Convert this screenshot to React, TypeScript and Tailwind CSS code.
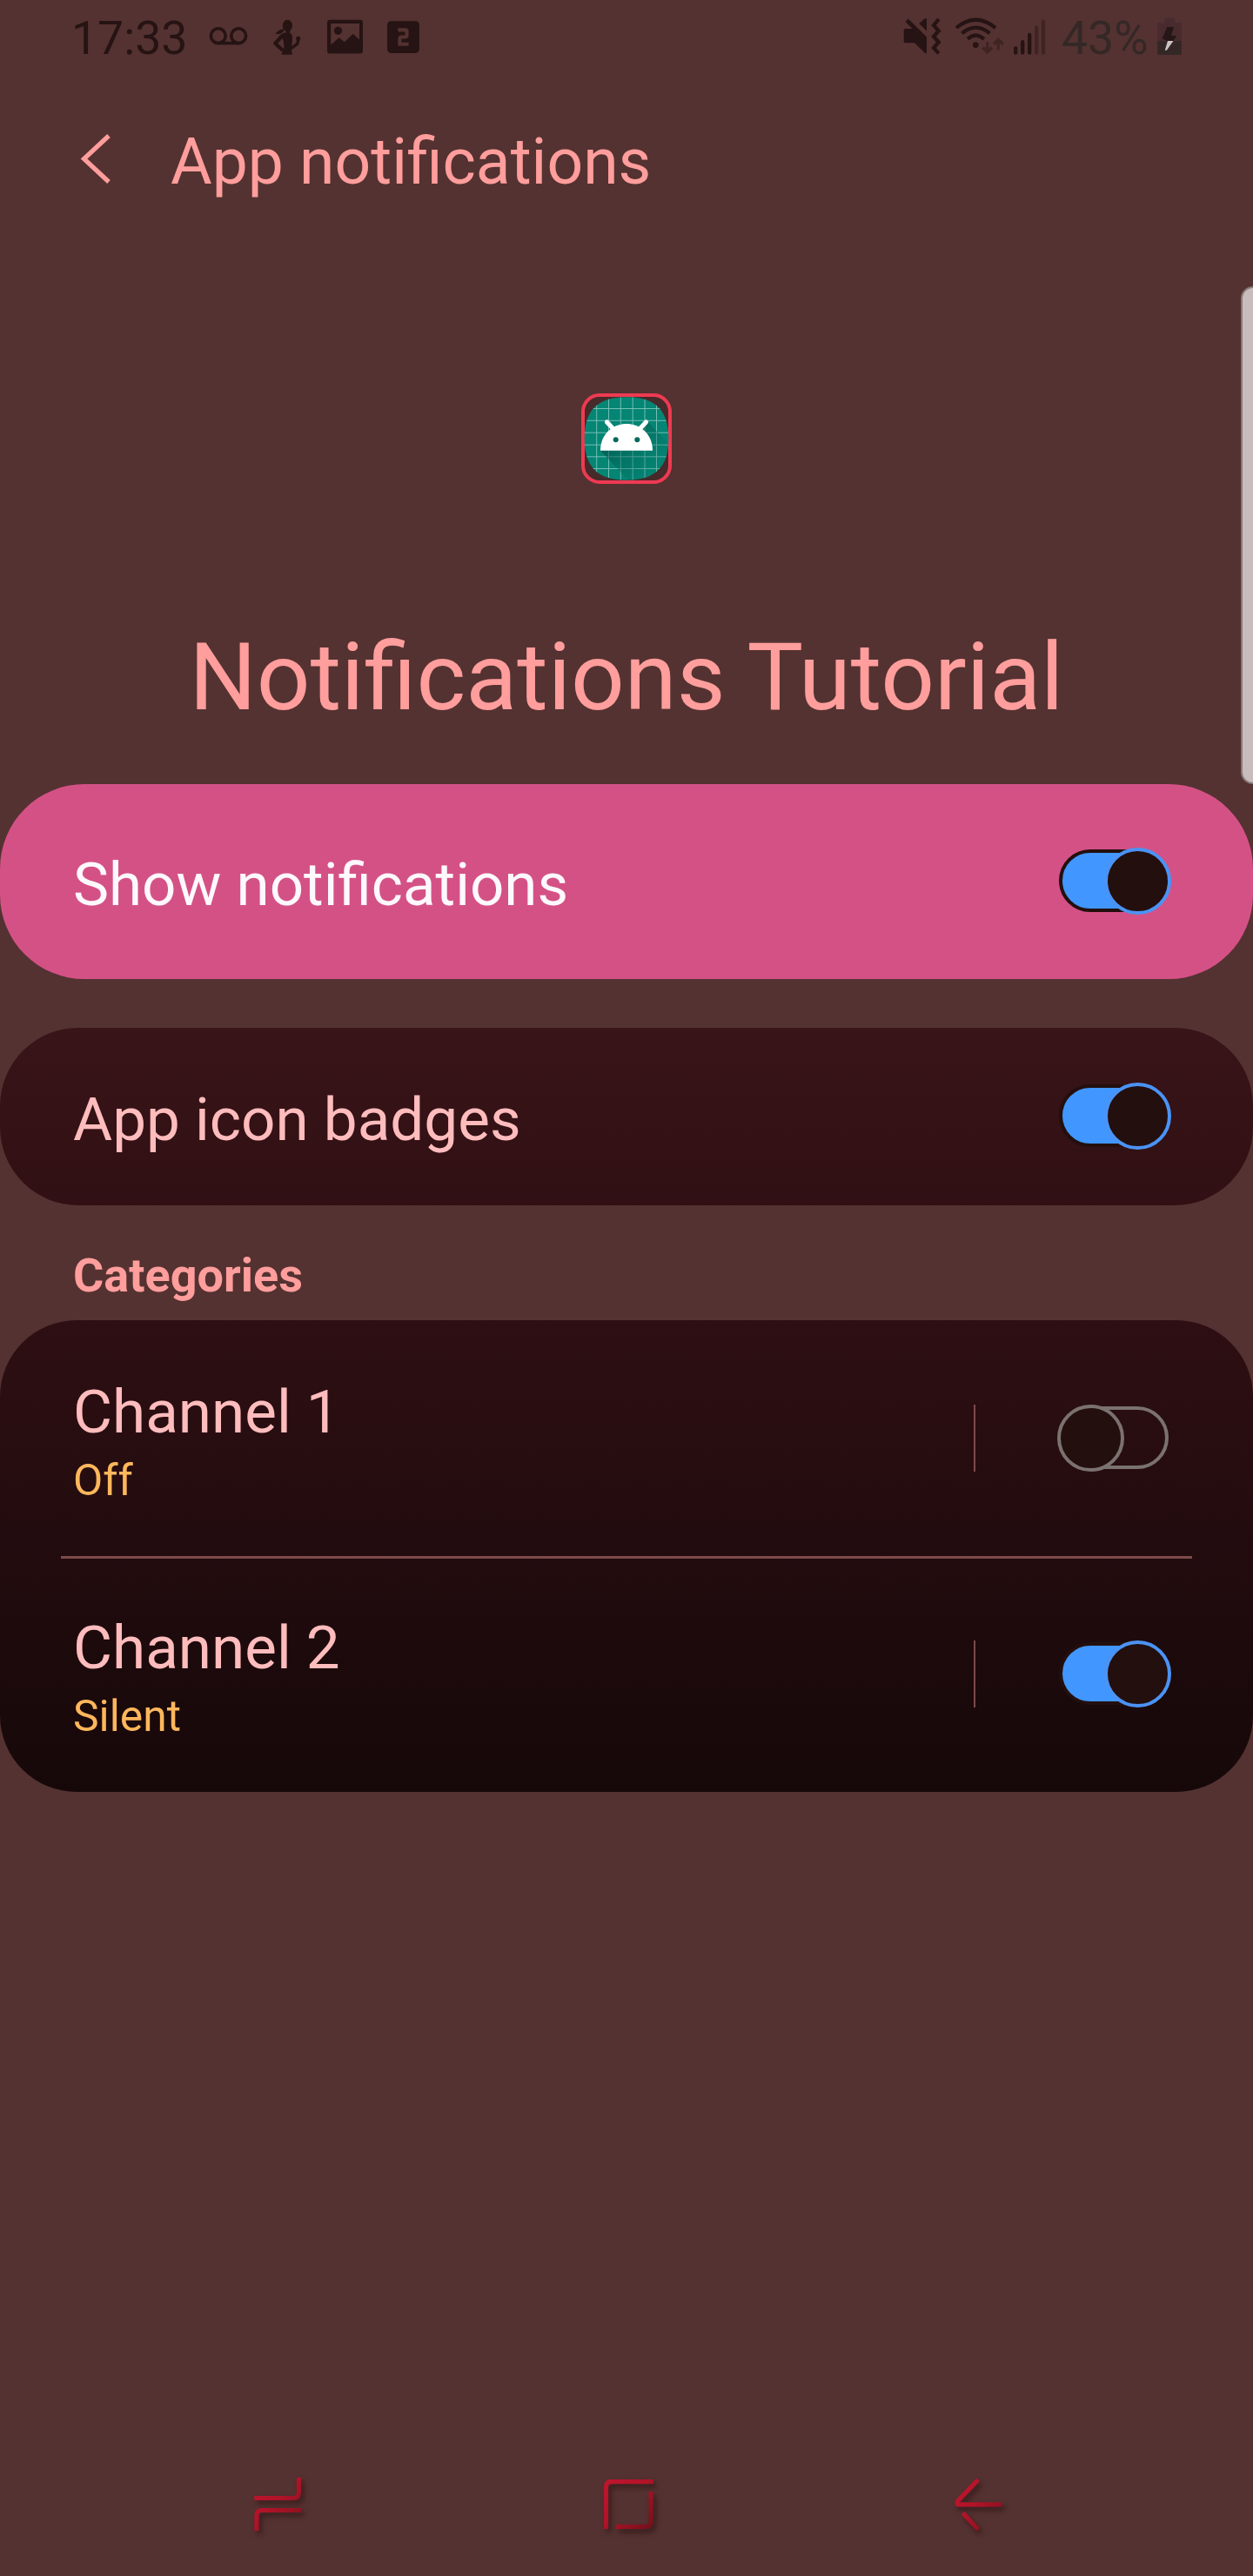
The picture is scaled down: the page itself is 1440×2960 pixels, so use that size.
import type { ReactNode } from 'react';
import { MdLooksTwo } from 'react-icons/md';

const INK = '#261313';
const FADED = '#402423';

function StatusBar() {
  return (
    <div className="flex h-[87px] items-center text-[#261313]">
      <span className="ml-[82px] w-[154px] text-[53.6px] leading-[87px]">17:33</span>
      <svg className="h-[87px] w-[60px]" viewBox="236 0 60 87" fill="none" stroke={INK} strokeWidth="3.6">
        <circle cx="250.8" cy="41.2" r="8.4" />
        <circle cx="274.2" cy="41.2" r="8.4" />
        <path d="M250.8 49.6H274.2" />
      </svg>
      <svg className="h-[87px] w-[64px]" viewBox="296 0 64 87" fill={INK}>
        <ellipse cx="330.4" cy="29.5" rx="5.6" ry="6.8" />
        <path d="M326.500 33.500C322.500 33.300 320 35 316.500 38.500C319.500 40 323 39.600 326 35.500Z" />
        <path d="M328.500 34H333.500L333 37.500C335.500 39 336.300 41.500 336 45L335.300 52L334.500 55L336 62.800H323.300L325 58.500L326.500 54L325.500 46L322.500 40.500Q324 37.500 328.500 37.500Z" />
        <path d="M324.500 41L316.300 49.800L325 58" fill="none" stroke={INK} strokeWidth="4.200" strokeLinejoin="round" />
        <path d="M334 56L341.800 50.300L343 44" fill="none" stroke={INK} strokeWidth="3.400" strokeLinejoin="round" strokeLinecap="round" />
        <circle cx="342.700" cy="44.300" r="2.500" />
      </svg>
      <svg className="h-[87px] w-[79px]" viewBox="360 0 79 87" fill={INK}>
        <path
          fillRule="evenodd"
          d="M379 22.700h35a3 3 0 0 1 3 3v32.800a3 3 0 0 1-3 3h-35a3 3 0 0 1-3-3v-32.800a3 3 0 0 1 3-3zM380.200 27v24.500l9.500-8.200 6 5 10-9.300 7.300 6.500V27z"
        />
        <circle cx="388.500" cy="35.300" r="4.600" />
      </svg>
      <MdLooksTwo className="size-[49px] -translate-y-px" />

      <svg className="ml-[542px] h-[87px] w-[60px]" viewBox="1030 0 60 87" fill={INK}>
        <path d="M1040.500 25L1043.700 21.600L1065 42.600V60.500Q1064.500 62 1063 61L1051 49.300H1040.500Q1038.700 49.300 1038.700 47.500V35Q1038.700 33 1040.500 33H1048.500Z" />
        <path d="M1056.300 27L1062.500 21.500Q1065 20 1065 22.500V35.500Z" />
        <path d="M1079 22L1073 29L1078.700 35.500L1073 42L1078.700 48.500L1073 55L1078.700 61.300" fill="none" stroke={INK} strokeWidth="4.200" />
      </svg>
      <svg className="h-[87px] w-[70px]" viewBox="1090 0 70 87" fill="none" stroke={INK} strokeWidth="4.200">
        <path d="M1099 32Q1121.300 13.500 1144 32" />
        <path d="M1105.500 38.400Q1121.300 25 1137.500 38.400" />
        <path d="M1112 44.800Q1121.300 36.500 1131 44.800" />
        <circle cx="1121.300" cy="51.700" r="3.300" fill={INK} stroke="none" />
        <g stroke={FADED} strokeWidth="3.300">
          <path d="M1134.700 48V60M1129.500 54.500L1134.700 60L1140 54.500" />
          <path d="M1147.300 57.500V45.500M1142 51L1147.300 45.500L1152.600 51" />
        </g>
      </svg>
      <svg className="h-[87px] w-[60px]" viewBox="1160 0 60 87" strokeWidth="4.300" strokeLinecap="round" stroke={INK}>
        <path d="M1167.200 55.300V60.700M1175.200 48.200V60.700M1183.200 40V60.700" />
        <path d="M1191.200 32V60.700M1199 25V60.700" stroke={FADED} />
      </svg>
      <span className="w-[104px] text-[53.6px] leading-[87px] text-[#342826]">43%</span>
      <svg className="h-[87px] w-[40px]" viewBox="1324 0 40 87">
        <path d="M1338 26V22.500Q1338 20.500 1340 20.500H1348.500Q1350.500 20.500 1350.500 22.500V26H1355.500Q1358 26 1358 28.500V47H1330V28.500Q1330 26 1332.500 26Z" fill="#492b2f" />
        <path d="M1330 47H1358V60.500Q1358 63 1355.500 63H1332.500Q1330 63 1330 60.500Z" fill="#342826" />
        <path d="M1341.300 31H1349L1346 41H1352.300L1348.500 47H1342L1335.500 44.500Z" fill="#261717" />
        <path d="M1342 47H1348.500L1341 57.500Q1339 58.500 1339 57Z" fill="#cfc4c3" />
      </svg>
    </div>
  );
}

function AppIcon() {
  return (
    <svg className="size-[104px]" viewBox="0 0 104 104">
      <defs>
        <clipPath id="squircle">
          <path d="M52 4.300C85 4.300 100.300 19 100.300 52S85 99.700 52 99.700S3.700 85 3.700 52S19 4.300 52 4.300Z" />
        </clipPath>
        <linearGradient id="shade" x1="30" y1="50" x2="85" y2="100" gradientUnits="userSpaceOnUse">
          <stop offset="0" stopColor="#00483f" stopOpacity="0.650" />
          <stop offset="1" stopColor="#00796b" stopOpacity="0.100" />
        </linearGradient>
      </defs>
      <rect x="2" y="2" width="100" height="100" rx="19" fill="#472a2a" stroke="#ee3a52" strokeWidth="4" />
      <g clipPath="url(#squircle)">
        <rect width="104" height="104" fill="#058574" />
        <path d="M17.700 0V104M31.500 0V104M45.300 0V104M59.200 0V104M73 0V104M86.500 0V104M0 17.500H104M0 31.300H104M0 45.200H104M0 59.200H104M0 72.800H104M0 86.500H104" stroke="#7ec4bb" strokeWidth="0.900" />
        <path d="M22 65.700L58 104H104V62L77 33Z" fill="url(#shade)" />
      </g>
      <path d="M22 65.700C22 48 35 35 52 35S82 48 82 65.700Z" fill="#fff" />
      <path d="M29.500 33L37 41M74.500 33L67 41" stroke="#fff" strokeWidth="5.200" strokeLinecap="round" />
      <circle cx="39.700" cy="53.200" r="3" fill="#056a5d" />
      <circle cx="64.300" cy="53.200" r="3" fill="#056a5d" />
    </svg>
  );
}

function Toggle({ on }: { on: boolean }) {
  return (
    <div className="relative h-[77px] w-[131px] shrink-0">
      <div
        className={
          on
            ? 'absolute top-[2px] left-[2px] h-[72px] w-[126px] rounded-full border-4 border-[#230f0e] bg-[#4197ff]'
            : 'absolute top-[2px] left-[2px] h-[72px] w-[126px] rounded-full border-4 border-[#7b7270]'
        }
      />
      <div
        className={
          on
            ? 'absolute top-0 right-0 size-[77px] rounded-full border-4 border-[#4b93f5] bg-[#230f0e]'
            : 'absolute top-0 left-0 size-[77px] rounded-full border-4 border-[#7b7270] bg-[#230f0e]'
        }
      />
    </div>
  );
}

function Channel({ name, status, on, className }: { name: string; status: string; on: boolean; className: string }) {
  return (
    <div className={`flex justify-between pr-[94px] pl-[84px] ${className}`}>
      <div className="flex flex-col">
        <span className="text-[69.2px] leading-[81px] text-[#ffbcbd]">{name}</span>
        <span className="text-[49.8px] leading-[76px] text-[#ffb75c]">{status}</span>
      </div>
      <div className="mt-[32px] flex gap-[94px]">
        <div className="h-[77px] w-[2px] bg-[#7d4a4a]" />
        <Toggle on={on} />
      </div>
    </div>
  );
}

function NavIcon({ viewBox, children }: { viewBox: string; children: ReactNode }) {
  return (
    <svg
      className="h-[100px] w-[100px] drop-shadow-[3px_4px_3px_rgba(25,5,5,0.55)]"
      viewBox={viewBox}
      fill="none"
      stroke="url(#navRed)"
      strokeWidth="5.200"
    >
      {children}
    </svg>
  );
}

function NavBar() {
  return (
    <div className="flex h-[132px] items-start justify-between pr-[265px] pl-[270px]">
      <NavIcon viewBox="270 2828 100 100">
        <defs>
          <linearGradient id="navRed" x1="0" y1="0" x2="58" y2="58" gradientUnits="userSpaceOnUse" gradientTransform="translate(292 2848)">
            <stop offset="0" stopColor="#c2152e" />
            <stop offset="0.450" stopColor="#b01328" />
            <stop offset="1" stopColor="#7a111d" />
          </linearGradient>
        </defs>
        <path d="M343.400 2847V2864Q343.400 2870.500 337 2870.500H292.300" />
        <path d="M346.300 2884.500H301Q294.900 2884.500 294.900 2891V2908" />
      </NavIcon>
      <NavIcon viewBox="671.500 2828 100 100">
        <defs>
          <linearGradient id="homeRed" x1="692" y1="2849" x2="750" y2="2907" gradientUnits="userSpaceOnUse">
            <stop offset="0" stopColor="#c2152e" />
            <stop offset="0.450" stopColor="#b01328" />
            <stop offset="1" stopColor="#6e101a" />
          </linearGradient>
        </defs>
        <path stroke="url(#homeRed)" d="M749.500 2851.600H701Q695 2851.600 695 2858V2906" />
        <path stroke="url(#homeRed)" d="M746.600 2863V2897Q746.600 2903.300 740 2903.300H706.500" />
      </NavIcon>
      <NavIcon viewBox="1075 2828 100 100">
        <defs>
          <linearGradient id="backRed" x1="1098" y1="2855" x2="1152" y2="2905" gradientUnits="userSpaceOnUse">
            <stop offset="0" stopColor="#c2152e" />
            <stop offset="0.450" stopColor="#b01328" />
            <stop offset="1" stopColor="#7a111d" />
          </linearGradient>
        </defs>
        <path stroke="url(#backRed)" d="M1124 2849.500L1101 2873.500Q1098.500 2877.900 1102 2877.900H1151.500" />
        <path stroke="url(#backRed)" d="M1106.500 2887.500L1124 2906.500" />
      </NavIcon>
    </div>
  );
}

export default function App() {
  return (
    <div className="relative flex h-[2960px] w-[1440px] flex-col overflow-hidden bg-[#543231] font-['Roboto',sans-serif]">
      <StatusBar />

      <header className="flex h-[198px] items-center">
        <svg className="ml-[86px] h-[70px] w-[50px]" viewBox="86 151 50 70" fill="none" stroke="#ff9e9c" strokeWidth="5.200">
          <path d="M125 156L96.500 182.500L125 209" />
        </svg>
        <h1 className="ml-[60px] text-[73.2px] leading-[86px] text-[#ff9e9c]">App notifications</h1>
      </header>

      <section className="flex h-[616px] flex-col items-center pt-[167px]">
        <AppIcon />
        <h2 className="mt-[156px] text-[108.4px] leading-[131px] whitespace-nowrap text-[#ff9e9c]">Notifications Tutorial</h2>
      </section>

      <section className="flex h-[224px] items-center justify-between rounded-[97px] bg-[#d45186] pr-[94px] pb-px pl-[84px]">
        <span className="pt-[8px] text-[69.1px] leading-[80px] text-[#fdf8fc]">Show notifications</span>
        <Toggle on />
      </section>

      <section className="mt-[56px] flex h-[204px] items-center justify-between rounded-[90px] bg-linear-to-b from-[#391418] to-[#301014] pr-[94px] pb-px pl-[84px]">
        <span className="pt-[8px] text-[69.2px] leading-[80px] text-[#ffbcbd]">App icon badges</span>
        <Toggle on />
      </section>

      <h3 className="flex h-[132px] items-center pt-[30px] pl-[84px] text-[54px] leading-[64px] font-bold text-[#ff9e9c]">
        Categories
      </h3>

      <section className="flex h-[542px] flex-col rounded-[88px] bg-linear-to-b from-[#2e0f13] to-[#160809]">
        <Channel name="Channel 1" status="Off" on={false} className="h-[271px] pt-[65px]" />
        <div className="mx-[70px] h-[3px] bg-[#7d4a4a]" />
        <Channel name="Channel 2" status="Silent" on className="h-[268px] pt-[62px]" />
      </section>

      <div className="flex-1" />
      <NavBar />

      {/* Edge panel handle resting over the right side of the screen */}
      <div className="absolute top-[329px] -right-[14px] h-[572px] w-[28px] rounded-[16px] border-2 border-[#887a79] bg-[#c8bcbc]" />
    </div>
  );
}
